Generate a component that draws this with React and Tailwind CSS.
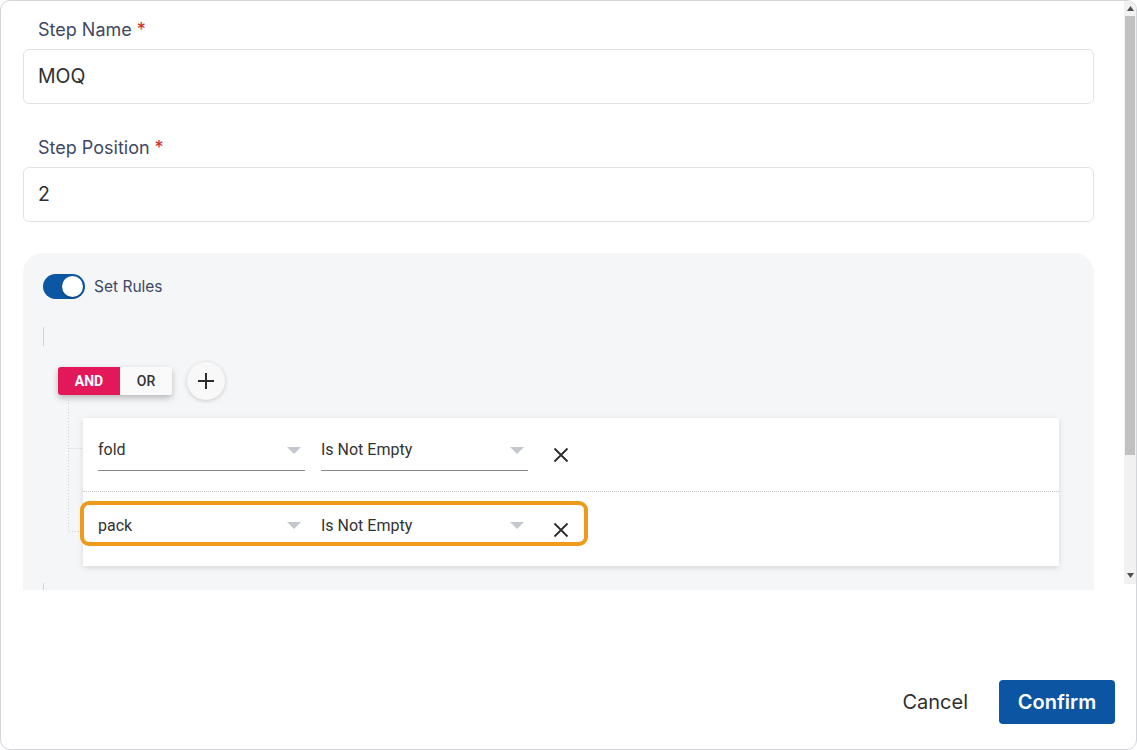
import React from "react";

const rules = [
  { field: "fold", op: "Is Not Empty" },
  { field: "pack", op: "Is Not Empty", highlight: true },
];

const Caret = () => (
  <svg width="14" height="7" viewBox="0 0 14 7" className="shrink-0">
    <path d="M0 0 L14 0 L7 7 Z" fill="#c4c8ce" />
  </svg>
);

const CloseIcon = () => (
  <svg width="16" height="16" viewBox="0 0 16 16" fill="none">
    <path d="M1.5 1.5 L14.5 14.5 M14.5 1.5 L1.5 14.5" stroke="#2b2b2b" strokeWidth="1.8" />
  </svg>
);

const Select = ({ value, underline }) => (
  <div
    className={
      "w-[207px] h-[32px] flex items-center justify-between pr-[4px] " +
      (underline ? "border-b border-[#8a8a8a]" : "")
    }
  >
    <span className="text-[16px] text-[#333] leading-none pb-[9px]">{value}</span>
    <span className="pb-[9px]">
      <Caret />
    </span>
  </div>
);

const Label = ({ children }) => (
  <div className="h-[24px] flex items-center pl-[15px] text-[18px] text-[#3e4865]">
    {children}
    <span className="text-[#d62828] ml-[5px]">*</span>
  </div>
);

const TextInput = ({ value }) => (
  <div className="mt-[8px] h-[55px] border border-[#e2e2e2] rounded-[6px] flex items-center px-[14px] text-[19.5px] text-[#2f2f2f]">
    {value}
  </div>
);

const RuleRow = ({ rule, first }) => (
  <div
    className={
      "relative flex items-start gap-[16px] pl-[15px] " +
      (first ? "pt-[21px] h-[73px]" : "pt-[22px] h-[75px] border-t border-dotted border-[#c8c8c8]")
    }
  >
    <Select value={rule.field} underline={!rule.highlight} />
    <Select value={rule.op} underline={!rule.highlight} />
    <div className="ml-[9px] h-[32px] flex items-center">
      <CloseIcon />
    </div>
    {rule.highlight && (
      <div className="absolute left-[-3px] top-[9px] w-[508px] h-[45px] border-[4px] border-[#ee9a1c] rounded-[9px]" />
    )}
  </div>
);

export default function App() {
  return (
    <div
      className="w-[1137px] h-[750px] bg-white border border-[#d3d5da] rounded-[10px] overflow-hidden flex flex-col"
      style={{ fontFamily: "Inter, 'Noto Sans', sans-serif" }}
    >
      <div className="h-[589px] flex flex-row overflow-hidden shrink-0">
        <div className="flex-1 pl-[22px] pr-[30px] pt-[16px]">
          <Label>Step Name</Label>
          <TextInput value="MOQ" />
          <div className="mt-[31px]">
            <Label>Step Position</Label>
          </div>
          <TextInput value="2" />

          <div className="mt-[31px] h-[400px] bg-[#f5f6f8] rounded-t-[20px] pt-[21px] pl-[20px]">
            <div className="flex items-center gap-[9px]">
              <div className="w-[42px] h-[25px] rounded-full bg-[#0b57a4] flex items-center justify-end pr-[2px]">
                <div className="w-[21px] h-[21px] rounded-full bg-white shadow-[0_1px_2px_rgba(0,0,0,0.3)]" />
              </div>
              <span className="text-[15.5px] text-[#3e4865]">Set Rules</span>
            </div>

            <div className="mt-[28px] w-px h-[19px] bg-[#d4d4d4]" />

            <div style={{ fontFamily: "Roboto, 'Noto Sans', sans-serif" }}>
              <div className="mt-[16px] ml-[15px] flex items-center">
                <div className="flex h-[28px] rounded-[3px] overflow-hidden shadow-[0_3px_6px_rgba(0,0,0,0.25)]">
                  <div className="w-[62px] bg-[#e3185b] text-white font-bold text-[14px] flex items-center justify-center">
                    AND
                  </div>
                  <div className="w-[52px] bg-[#fafafa] text-[#333] font-medium text-[14px] flex items-center justify-center">
                    OR
                  </div>
                </div>
                <div className="ml-[15px] w-[38px] h-[38px] rounded-full bg-[#f8f8f8] shadow-[0_1px_4px_rgba(0,0,0,0.18)] flex items-center justify-center">
                  <svg width="18" height="18" viewBox="0 0 18 18" fill="none">
                    <path d="M9 1 V17 M1 9 H17" stroke="#2b2b2b" strokeWidth="2" />
                  </svg>
                </div>
              </div>

              <div className="flex flex-row">
                <svg width="40" height="134" viewBox="0 0 40 134" className="shrink-0">
                  <path
                    d="M25.5 0 V131.5 H39 M25.5 48.5 H39"
                    stroke="#cfcfcf"
                    strokeWidth="1"
                    strokeDasharray="1 2"
                    fill="none"
                  />
                </svg>
                <div className="mt-[18px] w-[976px] bg-white shadow-[0_2px_6px_rgba(0,0,0,0.12)]">
                  {rules.map((rule, i) => (
                    <RuleRow key={rule.field} rule={rule} first={i === 0} />
                  ))}
                </div>
              </div>

              <div className="mt-[17px] w-px h-[19px] bg-[#d4d4d4]" />
            </div>
          </div>
        </div>

        <div className="w-[12px] h-[583px] bg-[#f1f1f1] flex flex-col items-center">
          <div className="h-[15px] flex items-center justify-center">
            <svg width="7" height="5" viewBox="0 0 7 5">
              <path d="M0 5 L7 5 L3.5 0 Z" fill="#505050" />
            </svg>
          </div>
          <div className="w-[10px] h-[439px] bg-[#c1c1c1]" />
          <div className="flex-1" />
          <div className="h-[15px] flex items-center justify-center mb-[1px]">
            <svg width="7" height="5" viewBox="0 0 7 5">
              <path d="M0 0 L7 0 L3.5 5 Z" fill="#505050" />
            </svg>
          </div>
        </div>
      </div>

      <div className="flex-1 flex items-end justify-end gap-[31px] pr-[21px] pb-[25px]">
        <button className="text-[20px] text-[#2f2f2f] h-[44px] px-0">Cancel</button>
        <button className="w-[116px] h-[44px] rounded-[4px] bg-[#0b55a3] text-white text-[20px] font-semibold">
          Confirm
        </button>
      </div>
    </div>
  );
}
